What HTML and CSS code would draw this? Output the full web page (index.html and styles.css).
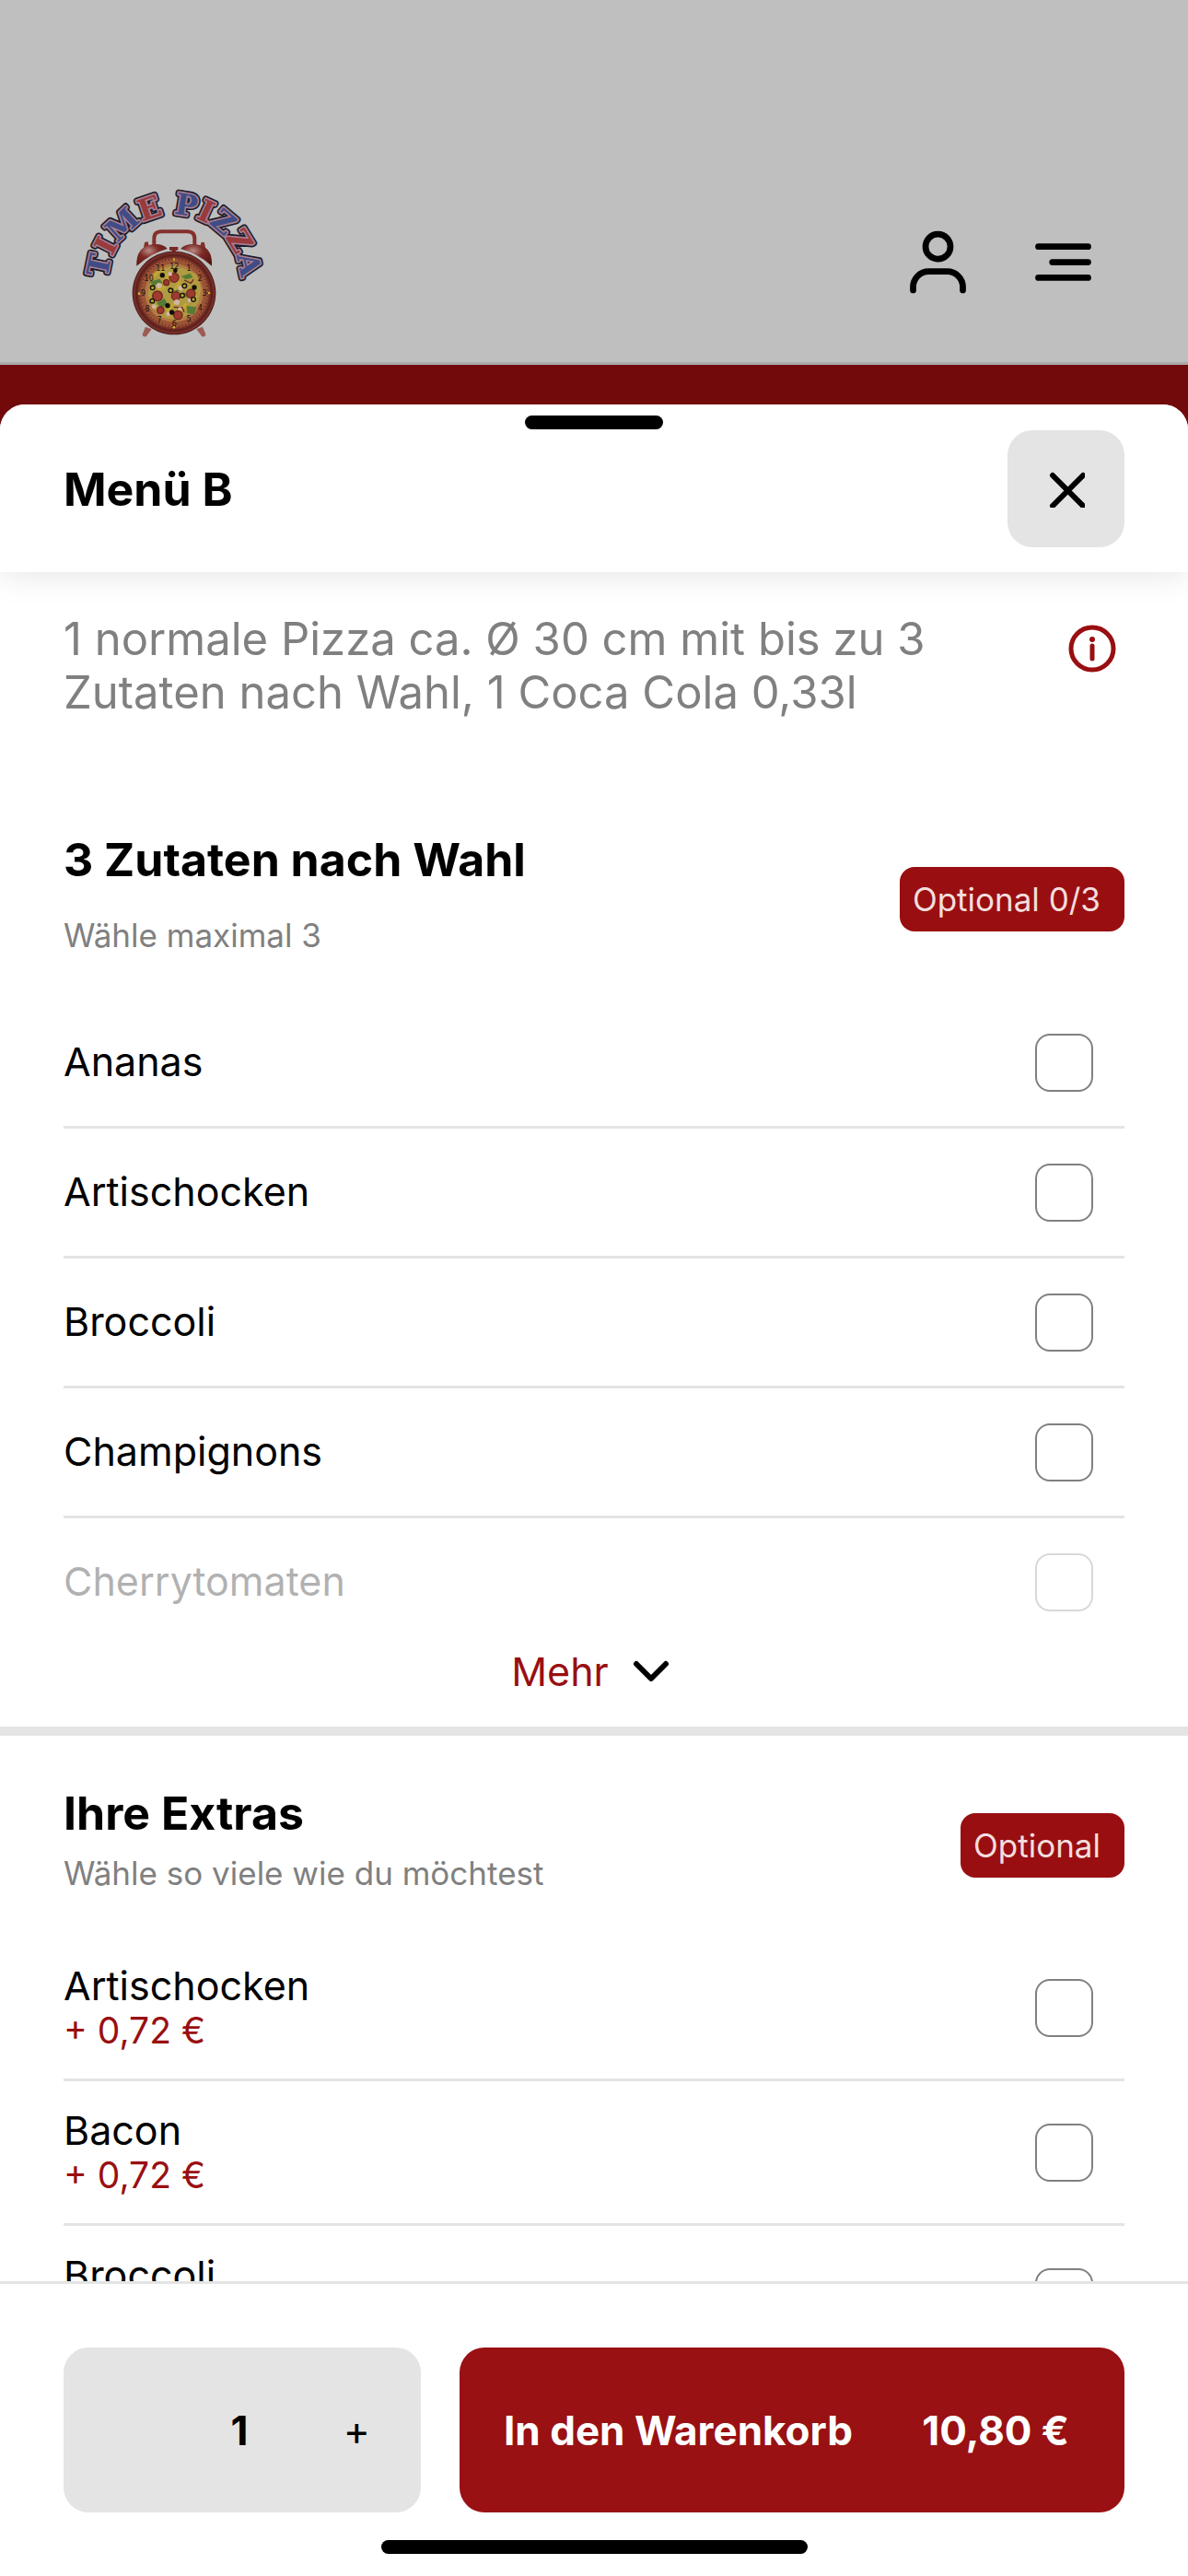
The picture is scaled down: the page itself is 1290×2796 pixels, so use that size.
FILE: index.html
```html
<!DOCTYPE html>
<html lang="de">
<head>
<meta charset="utf-8">
<meta name="viewport" content="width=device-width, initial-scale=1">
<title>Time Pizza – Menü B</title>
<link rel="stylesheet" href="styles.css">
</head>
<body>
<header class="site-header">
  <a class="logo" href="#" aria-label="Time Pizza">
    <svg viewBox="0 0 720 630" width="240" height="210">
      <defs>
        <path id="arc" d="M141 374 A216 216 0 0 1 573 374"/>
        <radialGradient id="bell" cx=".4" cy=".3" r=".8"><stop offset="0" stop-color="#b98a84"/><stop offset=".4" stop-color="#7c2a25"/><stop offset="1" stop-color="#541512"/></radialGradient>
        <radialGradient id="rim"><stop offset=".82" stop-color="#8d3f31"/><stop offset=".9" stop-color="#5a1e1a"/><stop offset=".96" stop-color="#7a322b"/><stop offset="1" stop-color="#3d1412"/></radialGradient>
        <text id="name" class="logo-name"><textPath href="#arc" startOffset="50%"><tspan class="blue">T</tspan><tspan class="red">I</tspan><tspan class="blue">M</tspan><tspan class="red">E</tspan> <tspan class="blue">P</tspan><tspan class="red">I</tspan><tspan class="blue">Z</tspan><tspan class="red">Z</tspan><tspan class="blue">A</tspan></textPath></text>
      </defs>
      <use href="#name" class="outline-dark"/>
      <use href="#name" class="outline-light"/>
      <use href="#name"/>
      <path d="M292 262V236Q292 214 316 214H400Q424 214 424 236V262" fill="none" stroke="#84302b" stroke-width="12"/>
      <path d="M257 272l4-22 10-4 6 20zM440 268l6-20 10 2 4 22z" fill="#84302b"/>
      <path d="M342 264h28v11h-8v18h-12v-18h-8z" fill="#7a2722"/>
      <path d="M235 326Q232 264 286 256Q320 252 335 270Q280 286 235 326z" fill="url(#bell)"/>
      <path d="M480 326Q484 264 430 256Q396 252 378 270Q436 286 480 326z" fill="url(#bell)"/>
      <path d="M264 524l20 8-18 24q-12 2-12-8zM450 524l-20 8 18 24q12 2 12-8z" fill="#9c5b54"/>
      <circle cx="357" cy="414" r="136" fill="url(#rim)"/>
      <circle cx="357" cy="414" r="112" fill="#9b5335"/>
      <circle cx="357" cy="414" r="109" fill="none" stroke="#2c1411" stroke-width="4" stroke-dasharray="2 9"/>
      <circle cx="357" cy="414" r="95" fill="#b17a43"/>
      <path d="M357 326l38 10 36 18 14 46-8 44-28 38-42 20-46-8-36-32-14-44 12-48 30-34z" fill="#b09a42"/>
      <path d="M276 378l34-10 10 14-28 8zM380 360l30-10 8 14-22 6zM300 446l26-14 10 18-20 14zM398 456l32 4-8 24-22-4zM336 396l40 10-12 8zM384 412l38 8-26 8z" fill="#557b35"/>
      <g fill="none" stroke="#c2a92f" stroke-width="9" stroke-linecap="round"><path d="M320 346l20 20M374 380l-14 22M296 410l30-14M412 400l16 24M336 470l30-30M380 470l16-20M290 360l18-18"/></g>
      <g fill="#9d3b2f" stroke="#70261f" stroke-width="4"><circle cx="357" cy="364" r="15"/><circle cx="332" cy="380" r="9"/><circle cx="303" cy="424" r="16"/><circle cx="363" cy="424" r="14"/><circle cx="412" cy="416" r="14"/><circle cx="370" cy="486" r="14"/><circle cx="313" cy="470" r="11"/><path d="M356 460l28 2 6 14M390 372l22 10 8-12" fill="none"/></g>
      <g fill="#d0b7a4"><circle cx="344" cy="352" r="7"/><circle cx="308" cy="390" r="9"/><circle cx="378" cy="398" r="8"/><circle cx="366" cy="444" r="9"/><circle cx="292" cy="458" r="7"/><circle cx="408" cy="438" r="7"/><circle cx="338" cy="482" r="7"/><circle cx="376" cy="466" r="6"/></g>
      <g fill="#0f0d0a"><circle cx="319" cy="356" r="8"/><circle cx="361" cy="341" r="7"/><circle cx="423" cy="396" r="8"/><circle cx="336" cy="455" r="8"/><circle cx="350" cy="477" r="8"/></g>
      <g fill="#b8a12f" stroke="#15130c" stroke-width="4"><circle cx="287" cy="397" r="7"/><circle cx="346" cy="406" r="7"/><circle cx="391" cy="391" r="7"/><circle cx="384" cy="422" r="7"/><circle cx="420" cy="435" r="7"/><circle cx="286" cy="440" r="7"/></g>
      <g class="dial"><text x="358" y="336">12</text><text x="405" y="342">1</text><text x="441" y="374">2</text><text x="456" y="422">3</text><text x="442" y="472">4</text><text x="405" y="508">5</text><text x="358" y="521">6</text><text x="309" y="510">7</text><text x="270" y="473">8</text><text x="257" y="422">9</text><text x="275" y="374">10</text><text x="313" y="342">11</text></g>
      <g fill="#c9b52d"><circle cx="357" cy="305" r="4"/><circle cx="357" cy="526" r="4"/><circle cx="243" cy="416" r="4"/><circle cx="471" cy="414" r="4"/></g>
    </svg>
  </a>
  <nav class="header-nav">
    <button class="icon-button" aria-label="Konto">
      <svg class="icon" viewBox="0 0 24 24"><circle cx="12" cy="7" r="4"/><path d="M4 21v-1a5 5 0 0 1 5-5h6a5 5 0 0 1 5 5v1"/></svg>
    </button>
    <button class="icon-button" aria-label="Navigation">
      <svg class="icon" viewBox="0 0 24 24"><path d="M4 7h16M8.500 12H20M4 17h16"/></svg>
    </button>
  </nav>
</header>

<main class="backdrop">
  <section class="sheet" role="dialog" aria-labelledby="sheet-title">
    <header class="sheet-header">
      <span class="handle"></span>
      <h1 class="title" id="sheet-title">Menü B</h1>
      <button class="close" aria-label="Schließen">
        <svg viewBox="0 0 40 40" width="40" height="40"><path d="M5 5l33 33M38 5L5 38"/></svg>
      </button>
    </header>

    <div class="sheet-body">
      <div class="intro">
        <p class="intro-text">1 normale Pizza ca. Ø 30 cm mit bis zu 3 Zutaten nach Wahl, 1 Coca Cola 0,33l</p>
        <button class="info" aria-label="Produktinformationen">
          <svg viewBox="0 0 70 70" width="70" height="70"><circle cx="35" cy="35" r="23"/><path d="M35 32v14"/><circle class="dot" cx="35" cy="25" r="3"/></svg>
        </button>
      </div>

      <section class="group">
        <header class="group-header">
          <div class="group-text loose">
            <h2 class="title">3 Zutaten nach Wahl</h2>
            <p class="hint">Wähle maximal 3</p>
          </div>
          <span class="badge">Optional 0/3</span>
        </header>
        <ul class="options">
          <li><label class="option"><span class="name">Ananas</span><input type="checkbox"></label></li>
          <li><label class="option"><span class="name">Artischocken</span><input type="checkbox"></label></li>
          <li><label class="option"><span class="name">Broccoli</span><input type="checkbox"></label></li>
          <li><label class="option"><span class="name">Champignons</span><input type="checkbox"></label></li>
          <li class="faded"><label class="option"><span class="name">Cherrytomaten</span><input type="checkbox"></label></li>
        </ul>
        <button class="more">Mehr
          <svg viewBox="0 0 40 24" width="40" height="24"><path d="M4 4l16 16L36 4"/></svg>
        </button>
      </section>

      <section class="group">
        <header class="group-header">
          <div class="group-text">
            <h2 class="title">Ihre Extras</h2>
            <p class="hint">Wähle so viele wie du möchtest</p>
          </div>
          <span class="badge">Optional</span>
        </header>
        <ul class="options">
          <li><label class="option priced"><span class="name">Artischocken<span class="price">+ 0,72 €</span></span><input type="checkbox"></label></li>
          <li><label class="option priced"><span class="name">Bacon<span class="price">+ 0,72 €</span></span><input type="checkbox"></label></li>
          <li><label class="option priced"><span class="name">Broccoli<span class="price">+ 0,72 €</span></span><input type="checkbox"></label></li>
        </ul>
      </section>
    </div>

    <footer class="sheet-footer">
      <div class="actions">
        <div class="stepper">
          <button aria-label="Weniger"></button>
          <output class="count">1</output>
          <button aria-label="Mehr">+</button>
        </div>
        <button class="add"><span>In den Warenkorb</span><span>10,80 €</span></button>
      </div>
      <span class="home-bar"></span>
    </footer>
  </section>
</main>
</body>
</html>
```
FILE: styles.css
```css
* { box-sizing: border-box; }

body {
  margin: 0;
  height: 100vh;
  display: flex;
  flex-direction: column;
  background: #bfbfbf;
  color: #000;
  font-family: Inter, "Liberation Sans", sans-serif;
  font-size: 44px;
  line-height: 52px;
}

h1, h2, p, ul { margin: 0; padding: 0; }
ul { list-style: none; }

button {
  margin: 0;
  padding: 0;
  border: 0;
  background: none;
  color: inherit;
  font: inherit;
}

svg { display: block; }

.site-header {
  display: flex;
  justify-content: space-between;
  align-items: flex-end;
  padding: 180px 95px 3px 70px;
  border-bottom: 3px solid #aaa;
}

.header-nav {
  display: flex;
  gap: 55px;
  padding-bottom: 65px;
}

.icon {
  width: 81px;
  height: 81px;
  fill: none;
  stroke: #000;
  stroke-width: 2;
  stroke-linecap: round;
}

.logo-name {
  font: bold 96px "DejaVu Serif", serif;
  text-anchor: middle;
}
.outline-dark { stroke: #1c1c2a; stroke-width: 20; stroke-linejoin: round; }
.outline-light { stroke: #a77f91; stroke-width: 10; stroke-linejoin: round; }
.blue { fill: #414c86; }
.red { fill: #993a3c; }
.dial {
  font: 24px "DejaVu Sans", sans-serif;
  text-anchor: middle;
  fill: #1d100c;
}

.backdrop {
  flex: 1;
  min-height: 0;
  display: flex;
  padding-top: 43px;
  background: #720a0b;
}

.sheet {
  flex: 1;
  min-width: 0;
  display: flex;
  flex-direction: column;
  overflow: hidden;
  border-radius: 27px 27px 0 0;
  background: #fff;
}

.sheet-header {
  position: relative;
  z-index: 1;
  display: flex;
  justify-content: space-between;
  align-items: center;
  padding: 28px 69px 27px;
  background: #fff;
  box-shadow: 0 0 36px rgba(0, 0, 0, .12);
}

.handle {
  position: absolute;
  top: 12px;
  left: calc(50% - 75px);
  width: 150px;
  height: 15px;
  border-radius: 8px;
  background: #000;
}

.title {
  font-size: 50px;
  font-weight: 700;
  line-height: 60px;
}

.close {
  display: grid;
  place-items: center;
  width: 127px;
  height: 127px;
  border-radius: 27px;
  background: #e4e4e4;
}
.close svg, .more svg {
  fill: none;
  stroke: #000;
  stroke-width: 6;
  stroke-linecap: round;
  stroke-linejoin: round;
}

.sheet-body {
  flex: 1;
  min-height: 0;
  overflow-y: auto;
  scrollbar-width: none;
}

.intro {
  display: flex;
  justify-content: space-between;
  align-items: flex-start;
  gap: 100px;
  padding: 44px 69px 68px;
}
.intro-text {
  color: #808080;
  font-size: 49px;
  line-height: 58px;
}
.info { padding-top: 4px; }
.info svg { fill: none; stroke: #990f11; stroke-width: 5; stroke-linecap: round; }
.info .dot { fill: #990f11; stroke: none; }

.group { padding: 54px 69px 32px; }
.group + .group { border-top: 10px solid #e4e4e4; }

.group-header {
  display: flex;
  justify-content: space-between;
  align-items: center;
  margin-bottom: 35px;
}
.group-text {
  display: grid;
  gap: 13px;
  padding-bottom: 12px;
}
.loose { gap: 30px; }

.hint {
  color: #808080;
  font-size: 35px;
  line-height: 44px;
}

.badge {
  padding: 13px 26px 13px 14px;
  border-radius: 16px;
  background: #990f11;
  color: #f3dede;
  font-size: 35px;
  line-height: 44px;
}

.option {
  display: flex;
  justify-content: space-between;
  align-items: center;
  height: 138px;
  padding-right: 34px;
}
.priced { height: 154px; }
.options li + li { border-top: 3px solid #e4e4e4; }
.faded .option { opacity: .3; }

.option input {
  appearance: none;
  width: 63px;
  height: 63px;
  margin: 0;
  border: 2px solid #808080;
  border-radius: 16px;
  background: #fff;
}

.name {
  padding-bottom: 2px;
  font-size: 43px;
}

.price {
  display: block;
  color: #990f11;
  font-size: 39px;
  line-height: 46px;
}

.more {
  display: flex;
  align-items: center;
  gap: 26px;
  margin: 0 auto;
  padding-right: 8px;
  color: #990f11;
  font-size: 43px;
  line-height: 56px;
}

.sheet-footer {
  display: flex;
  flex-direction: column;
  gap: 30px;
  padding: 69px 69px 24px;
  border-top: 3px solid #e4e4e4;
}

.actions {
  display: grid;
  grid-template-columns: 388px 1fr;
  gap: 42px;
  height: 179px;
}

.stepper {
  display: grid;
  grid-template-columns: repeat(3, 1fr);
  align-items: center;
  padding-right: 6px;
  border-radius: 27px;
  background: #e4e4e4;
  text-align: center;
}
.count { font-weight: 700; }

.add {
  display: flex;
  justify-content: space-between;
  align-items: center;
  padding: 0 60px 0 48px;
  border-radius: 27px;
  background: #991113;
  color: #fff;
  font-weight: 700;
}

.home-bar {
  align-self: center;
  width: 463px;
  height: 15px;
  border-radius: 8px;
  background: #000;
}
```
